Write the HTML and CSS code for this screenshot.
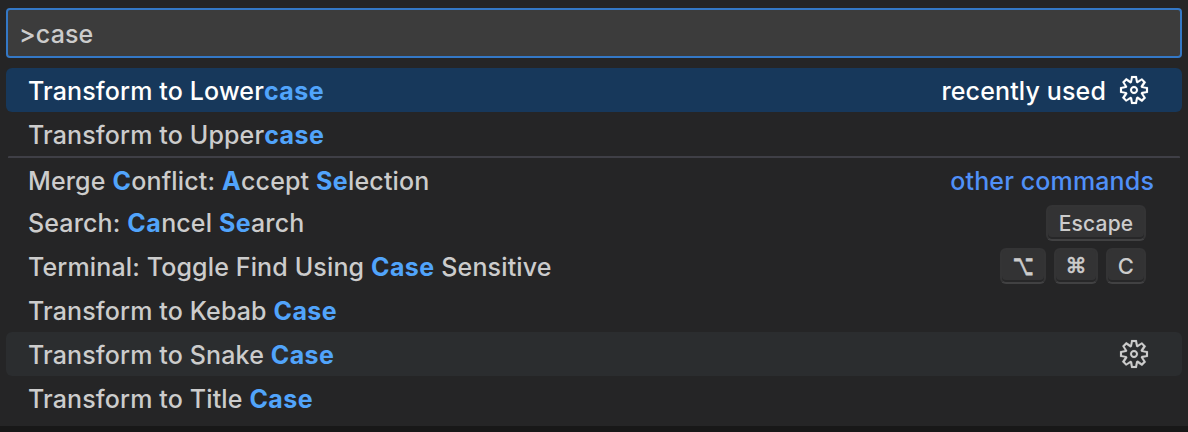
FILE: index.html
```html
<!DOCTYPE html>
<html lang="en">
<head>
<meta charset="utf-8">
<title>Command Palette</title>
<link rel="stylesheet" href="styles.css">
</head>
<body>
<svg class="defs" width="0" height="0" aria-hidden="true">
  <symbol id="gear" viewBox="0 0 16 16"><path fill-rule="evenodd" clip-rule="evenodd" d="M9.1 4.4L8.6 2H7.4l-.5 2.4-.7.3-2-1.3-.9.8 1.3 2-.2.7-2.4.5v1.2l2.4.5.3.8-1.3 2 .8.8 2-1.3.8.3.4 2.3h1.2l.5-2.4.8-.3 2 1.3.8-.8-1.3-2 .3-.8 2.3-.4V7.4l-2.4-.5-.3-.8 1.3-2-.8-.8-2 1.3-.7-.2zM9.4 1l.5 2.4L12 2.1l2 2-1.4 2.1 2.4.4v2.8l-2.4.5L14 12l-2 2-2.1-1.4-.5 2.4H6.6l-.5-2.4L4 13.9l-2-2 1.4-2.1L1 9.4V6.6l2.4-.5L2.1 4l2-2 2.1 1.4.4-2.4h2.8zm.6 7c0 1.1-.9 2-2 2s-2-.9-2-2 .9-2 2-2 2 .9 2 2zM8 9c.6 0 1-.4 1-1s-.4-1-1-1-1 .4-1 1 .4 1 1 1z"/></symbol>
</svg>
<main class="palette">
  <div class="query">&gt;case</div>
  <ul class="list">
    <li class="row selected"><span class="label">Transform to Lower<b>case</b></span><span class="group">recently used</span><svg class="gear"><use href="#gear"/></svg></li>
    <li class="row"><span class="label">Transform to Upper<b>case</b></span></li>
    <li class="row divided"><span class="label">Merge <b>C</b>onflict: <b>A</b>ccept <b>Se</b>lection</span><span class="group">other commands</span></li>
    <li class="row"><span class="label">Search: <b>Ca</b>ncel <b>Se</b>arch</span><span class="keys single"><kbd class="key word">Escape</kbd></span></li>
    <li class="row"><span class="label">Terminal: Toggle Find Using <b>Case</b> Sensitive</span><span class="keys"><kbd class="key symbol option"><span class="glyph">⌥</span></kbd><kbd class="key symbol command">⌘</kbd><kbd class="key letter">C</kbd></span></li>
    <li class="row"><span class="label">Transform to Kebab <b>Case</b></span></li>
    <li class="row hovered"><span class="label">Transform to Snake <b>Case</b></span><svg class="gear"><use href="#gear"/></svg></li>
    <li class="row"><span class="label">Transform to Title <b>Case</b></span></li>
  </ul>
</main>
</body>
</html>
```
FILE: styles.css
```css
* { box-sizing: border-box; }
body {
  margin: 0;
  height: 432px;
  overflow: hidden;
  background: #181818;
  color: #cccccc;
  font: 450 25px/44px Inter, "Liberation Sans", sans-serif;
  letter-spacing: 0.14px;
}
.defs { display: none; }
.palette {
  height: 426px;
  padding: 8px 6px 0;
  background: #252526;
}
.query {
  height: 50px;
  padding: 0 11px;
  border: 2px solid #3478c6;
  border-radius: 4px;
  background: #3c3c3c;
  line-height: 48px;
}
.list { margin: 10px 0 0; padding: 0; list-style: none; }
.row {
  display: flex;
  align-items: center;
  height: 44px;
  padding: 0 32px 0 22px;
  border-radius: 6px;
  white-space: nowrap;
}
.label { flex: 1; padding-top: 2px; }
.label b { color: #51a4fb; font-weight: 700; letter-spacing: 0.4px; }
.selected { background: #17385b; color: #fff; }
.hovered { background: #2b2d2f; }
.divided {
  margin: 0 2px;
  padding: 0 26px 0 20px;
  border-top: 2px solid #3f3f46;
  border-radius: 1px;
}
.divided .label, .divided .group { padding-top: 4px; }
.divided .group { color: #5090f8; }
.group { padding-top: 2px; }
.gear { width: 32px; height: 32px; fill: currentColor; stroke: currentColor; stroke-width: 0.08px; }
.group + .gear { margin-left: 12px; }
.keys { display: flex; gap: 8px; margin-right: 4px; }
.single { padding-top: 2px; }
.key {
  height: 36px;
  border: 2px solid #343435;
  border-bottom-color: #414142;
  border-radius: 6px;
  background: #333334;
  box-shadow: inset 0 -2px 0 #272728;
  font: 450 21px/33px Inter, "Liberation Sans", sans-serif;
  letter-spacing: 0.2px;
  text-align: center;
}
.word { width: 100px; }
.symbol { font-family: "DejaVu Sans", sans-serif; -webkit-text-stroke: 0.6px currentColor; }
.option { width: 46px; }
.glyph { display: inline-block; transform: scale(0.86, 1.35); }
.command { width: 44px; }
.letter { width: 40px; font-size: 22px; }
```
